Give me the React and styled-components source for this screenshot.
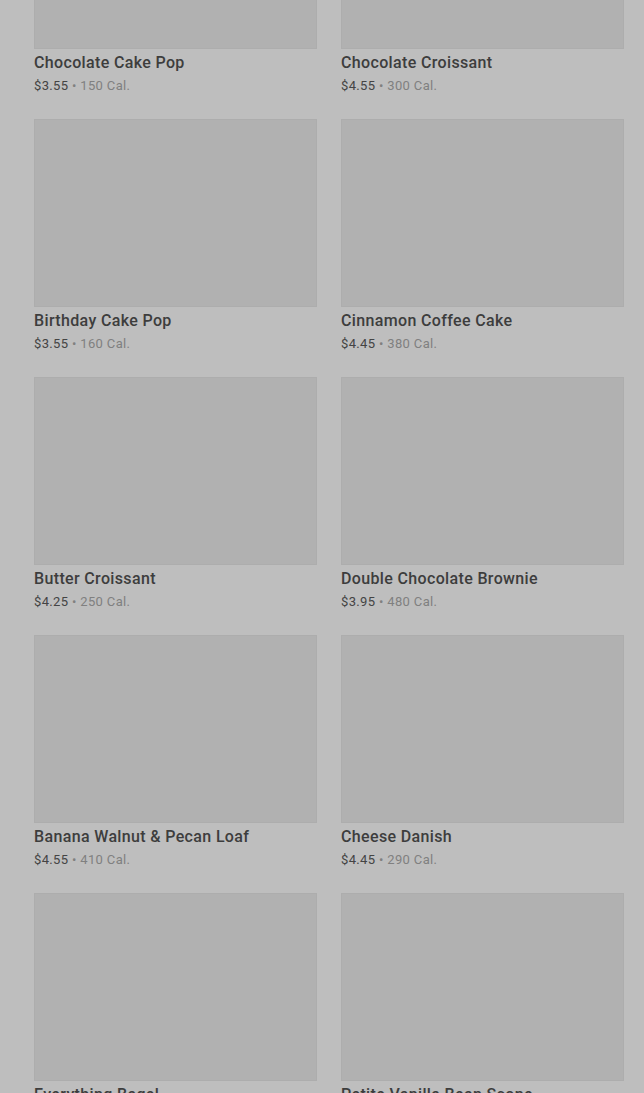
import styled, { createGlobalStyle } from "styled-components";

const GlobalStyle = createGlobalStyle`
    html, body {
        margin: 0;
        padding: 0;
        background: #bebebe;
        overflow: hidden;
    }
`;

const Page = styled.div`
    width: 644px;
    height: 1093px;
    overflow: hidden;
    background: #bebebe;
    font-family: Roboto, "Liberation Sans", sans-serif;
`;

const Grid = styled.div`
    display: grid;
    grid-template-columns: 283px 283px;
    column-gap: 24px;
    row-gap: 23px;
    padding: 0 20px 0 34px;
    margin-top: -139px;
`;

const Card = styled.div`
    display: flex;
    flex-direction: column;
`;

const Thumb = styled.div`
    height: 188px;
    background: #b1b1b1;
    box-shadow: inset 0 0 0 1px #adadad;
`;

const Name = styled.div`
    margin-top: 2px;
    font-size: 16px;
    line-height: 24px;
    font-weight: 500;
    color: #3d3d3d;
    letter-spacing: 0.35px;
`;

const Meta = styled.div`
    margin-top: 1px;
    font-size: 13px;
    line-height: 20px;
    color: #444444;
    letter-spacing: 0.35px;
    & span {
        color: #808080;
    }
`;

const items = [
    { name: "Chocolate Cake Pop", price: "3.55", cal: 150 },
    { name: "Chocolate Croissant", price: "4.55", cal: 300 },
    { name: "Birthday Cake Pop", price: "3.55", cal: 160 },
    { name: "Cinnamon Coffee Cake", price: "4.45", cal: 380 },
    { name: "Butter Croissant", price: "4.25", cal: 250 },
    { name: "Double Chocolate Brownie", price: "3.95", cal: 480 },
    { name: "Banana Walnut & Pecan Loaf", price: "4.55", cal: 410 },
    { name: "Cheese Danish", price: "4.45", cal: 290 },
    { name: "Everything Bagel", price: "1.95", cal: 290 },
    { name: "Petite Vanilla Bean Scone", price: "1.75", cal: 120 },
];

const App = () => {
    return (
        <Page>
            <GlobalStyle />
            <Grid>
                {items.map((item) => (
                    <Card key={item.name}>
                        <Thumb />
                        <Name>{item.name}</Name>
                        <Meta>
                            ${item.price} <span>• {item.cal} Cal.</span>
                        </Meta>
                    </Card>
                ))}
            </Grid>
        </Page>
    );
};

export default App;
